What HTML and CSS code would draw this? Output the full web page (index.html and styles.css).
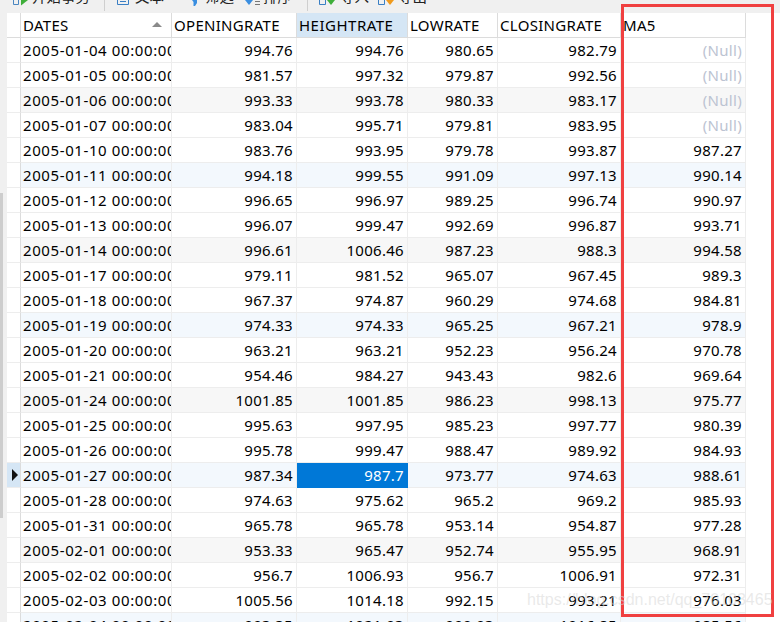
FILE: index.html
```html
<!DOCTYPE html>
<html lang="en">
<head>
<meta charset="UTF-8">
<title>Navicat MA5</title>
<link rel="stylesheet" href="styles.css">
</head>
<body>

<div class="toolbar">
  <span class="tool tool_begin"><svg width="16" height="6" viewBox="0 0 16 6"><path d="M.5 0v4.500h5V0" fill="none" stroke="#4a86c0"/><path d="M8 0h7L8 5.500z" fill="#3fae3a"/></svg>开始事务</span>
  <i class="sep sep_one"></i>
  <span class="tool tool_text"><svg width="15" height="6" viewBox="0 0 15 6"><path d="M.5 0v4.500h11V0M3 1.500h6" fill="none" stroke="#3a7fc4"/></svg>文本</span>
  <span class="tool tool_filter"><svg width="10" height="6" viewBox="0 0 10 6"><path d="M0 0h5v3L3 6H1.500V2z" fill="#3a8ee0"/></svg>筛选</span>
  <span class="tool tool_sort"><svg width="15" height="6" viewBox="0 0 15 6"><path d="M0 0h8L4 5z" fill="#3a8ee0"/><path d="M10 1.500h5M10 4.500h5" stroke="#777"/></svg>排序</span>
  <i class="sep sep_two"></i>
  <span class="tool tool_import"><svg width="18" height="6" viewBox="0 0 18 6"><path d="M.5 0v4.500h6V0" fill="none" stroke="#3a7fc4"/><path d="M8 0h8l-4 5z" fill="#3fae3a"/></svg>导入</span>
  <span class="tool tool_export"><svg width="17" height="6" viewBox="0 0 17 6"><path d="M.5 0v4.500h6V0" fill="none" stroke="#3a7fc4"/><path d="M8 0h8l-4 5z" fill="#f09a1c"/></svg>导出</span>
</div>

<div class="grid_wrap">
  <div class="side_bar"><div class="side_thumb"></div></div>
  <table class="grid">
    <colgroup>
      <col class="c_mark"><col class="c_dates"><col class="c_open"><col class="c_high"><col class="c_low"><col class="c_close"><col class="c_ma">
    </colgroup>
    <thead>
      <tr>
        <th></th>
        <th class="sorted">DATES<i class="sort_up"></i></th>
        <th>OPENINGRATE</th>
        <th class="active">HEIGHTRATE</th>
        <th>LOWRATE</th>
        <th>CLOSINGRATE</th>
        <th>MA5</th>
      </tr>
    </thead>
    <tbody>
      <tr><td></td><td class="date"><div>2005-01-04 00:00:00</div></td><td>994.76</td><td>994.76</td><td>980.65</td><td>982.79</td><td class="null">(Null)</td></tr>
      <tr><td></td><td class="date"><div>2005-01-05 00:00:00</div></td><td>981.57</td><td>997.32</td><td>979.87</td><td>992.56</td><td class="null">(Null)</td></tr>
      <tr class="gray"><td></td><td class="date"><div>2005-01-06 00:00:00</div></td><td>993.33</td><td>993.78</td><td>980.33</td><td>983.17</td><td class="null">(Null)</td></tr>
      <tr><td></td><td class="date"><div>2005-01-07 00:00:00</div></td><td>983.04</td><td>995.71</td><td>979.81</td><td>983.95</td><td class="null">(Null)</td></tr>
      <tr><td></td><td class="date"><div>2005-01-10 00:00:00</div></td><td>983.76</td><td>993.95</td><td>979.78</td><td>993.87</td><td>987.27</td></tr>
      <tr class="blue"><td></td><td class="date"><div>2005-01-11 00:00:00</div></td><td>994.18</td><td>999.55</td><td>991.09</td><td>997.13</td><td>990.14</td></tr>
      <tr><td></td><td class="date"><div>2005-01-12 00:00:00</div></td><td>996.65</td><td>996.97</td><td>989.25</td><td>996.74</td><td>990.97</td></tr>
      <tr><td></td><td class="date"><div>2005-01-13 00:00:00</div></td><td>996.07</td><td>999.47</td><td>992.69</td><td>996.87</td><td>993.71</td></tr>
      <tr class="gray"><td></td><td class="date"><div>2005-01-14 00:00:00</div></td><td>996.61</td><td>1006.46</td><td>987.23</td><td>988.3</td><td>994.58</td></tr>
      <tr><td></td><td class="date"><div>2005-01-17 00:00:00</div></td><td>979.11</td><td>981.52</td><td>965.07</td><td>967.45</td><td>989.3</td></tr>
      <tr><td></td><td class="date"><div>2005-01-18 00:00:00</div></td><td>967.37</td><td>974.87</td><td>960.29</td><td>974.68</td><td>984.81</td></tr>
      <tr class="blue"><td></td><td class="date"><div>2005-01-19 00:00:00</div></td><td>974.33</td><td>974.33</td><td>965.25</td><td>967.21</td><td>978.9</td></tr>
      <tr><td></td><td class="date"><div>2005-01-20 00:00:00</div></td><td>963.21</td><td>963.21</td><td>952.23</td><td>956.24</td><td>970.78</td></tr>
      <tr><td></td><td class="date"><div>2005-01-21 00:00:00</div></td><td>954.46</td><td>984.27</td><td>943.43</td><td>982.6</td><td>969.64</td></tr>
      <tr class="gray"><td></td><td class="date"><div>2005-01-24 00:00:00</div></td><td>1001.85</td><td>1001.85</td><td>986.23</td><td>998.13</td><td>975.77</td></tr>
      <tr><td></td><td class="date"><div>2005-01-25 00:00:00</div></td><td>995.63</td><td>997.95</td><td>985.23</td><td>997.77</td><td>980.39</td></tr>
      <tr><td></td><td class="date"><div>2005-01-26 00:00:00</div></td><td>995.78</td><td>999.47</td><td>988.47</td><td>989.92</td><td>984.93</td></tr>
      <tr class="blue current"><td class="mark"><i class="arrow"></i></td><td class="date"><div>2005-01-27 00:00:00</div></td><td>987.34</td><td class="picked">987.7</td><td>973.77</td><td>974.63</td><td>988.61</td></tr>
      <tr><td></td><td class="date"><div>2005-01-28 00:00:00</div></td><td>974.63</td><td>975.62</td><td>965.2</td><td>969.2</td><td>985.93</td></tr>
      <tr><td></td><td class="date"><div>2005-01-31 00:00:00</div></td><td>965.78</td><td>965.78</td><td>953.14</td><td>954.87</td><td>977.28</td></tr>
      <tr class="gray"><td></td><td class="date"><div>2005-02-01 00:00:00</div></td><td>953.33</td><td>965.47</td><td>952.74</td><td>955.95</td><td>968.91</td></tr>
      <tr><td></td><td class="date"><div>2005-02-02 00:00:00</div></td><td>956.7</td><td>1006.93</td><td>956.7</td><td>1006.91</td><td>972.31</td></tr>
      <tr><td></td><td class="date"><div>2005-02-03 00:00:00</div></td><td>1005.56</td><td>1014.18</td><td>992.15</td><td>993.21</td><td>976.03</td></tr>
      <tr class="blue"><td></td><td class="date"><div>2005-02-04 00:00:00</div></td><td>993.35</td><td>1021.03</td><td>990.03</td><td>1016.85</td><td>985.56</td></tr>
    </tbody>
  </table>
</div>

<div class="red_box"></div>
<div class="watermark">https://blog.csdn.net/qq_70103465</div>

</body>
</html>
```

FILE: styles.css
```css
* {margin:0; padding:0; box-sizing: border-box;}
html, body {width: 780px; height: 622px; overflow: hidden; background: #fff;}
body {font-family: "Noto Sans", "Noto Sans CJK SC", sans-serif; font-size: 15px; color: #000; position: relative;}

.toolbar {height: 13px; background: #f0f0f0; overflow: hidden; display: flex; align-items: flex-end; font-family: "Noto Sans CJK SC", sans-serif; font-size: 14.5px; color: #222;}
.tool {display: flex; align-items: flex-end; gap: 3px; flex: none; line-height: 20px; margin-bottom: 7px;}
.tool svg {flex: none;}
.tool_begin {margin-left: 13px;}
.tool_text {margin-left: 12px;}
.tool_filter {margin-left: 28px;}
.tool_sort {margin-left: 11px;}
.tool_import {margin-left: 11px;}
.tool_export {margin-left: 9px;}
.sep {flex: none; width: 1px; height: 11px; background: #cfcfcf; align-self: flex-start;}
.sep_one {margin-left: 14px;}
.sep_two {margin-left: 15px;}

.grid_wrap {display: flex; align-items: flex-start;}
.side_bar {width: 7px; height: 609px; background: #f0f0f0; flex: none;}
.side_thumb {width: 3px; height: 325px; margin-top: 180px; background: #cdcdcd;}

.grid {border-collapse: separate; border-spacing: 0; table-layout: fixed; width: 739px; flex: none; letter-spacing: 0.3px;}
.c_mark {width: 14px;}
.c_dates {width: 151px;}
.c_open {width: 125px;}
.c_high {width: 111px;}
.c_low {width: 90px;}
.c_close {width: 123px;}
.c_ma {width: 125px;}

.grid th, .grid td {height: 25px; border-right: 1px solid #ededed; border-bottom: 1px solid #ededed; line-height: 24px; white-space: nowrap; overflow: hidden;}
.grid th {font-weight: normal; text-align: left; padding-left: 2px; background: #fff; border-color: #dcdcdc; position: relative;}
.grid th.active {background: #d5e6f5; letter-spacing: 0.5px;}
.sort_up {position: absolute; right: 9px; top: 9px; border: 5px solid transparent; border-top: 0; border-bottom: 5px solid #8a8a8a;}

.grid td {text-align: right; padding-right: 3px;}
.grid td:first-child {padding: 0; border-right-color: #dcdcdc;}
.grid td.date {text-align: left; padding: 0 0 0 2px; letter-spacing: 0.6px;}
.date div {width: 148px; overflow: hidden;}

.gray td {background: #f7f7f7;}
.blue td {background: #f3f8fd;}
.gray td:first-child, .blue td:first-child {background: #fff;}
.blue td.mark {background: #d5e6f5; text-align: left;}
.arrow {display: block; width: 0; margin: 0 0 0 5px; border: 6px solid transparent; border-left: 6px solid #111; border-right: 0;}
.grid td.picked {background: #0078d7; color: #fff; border-color: #0078d7;}
.grid td.null {color: #bcc3d2;}

.red_box {position: absolute; left: 621px; top: 4px; width: 153px; height: 613px; border: 3px solid #f04040;}
.watermark {position: absolute; left: 527px; top: 591px; font-family: "Liberation Sans", sans-serif; font-size: 16px; color: rgba(215, 215, 215, 0.55); white-space: nowrap;}
```
